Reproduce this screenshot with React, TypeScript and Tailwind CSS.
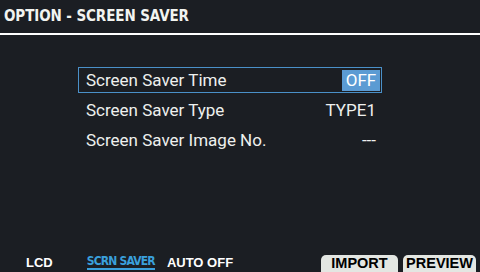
import React from "react";

const rows = [
    {label: "Screen Saver Time", value: "OFF", selected: true},
    {label: "Screen Saver Type", value: "TYPE1", selected: false},
    {label: "Screen Saver Image No.", value: "---", selected: false},
];

export default function App() {
    return (
        <div className="w-[480px] h-[272px] bg-[#1b1e23] text-white flex flex-col overflow-hidden font-['Roboto',sans-serif]">
            <header className="h-[35px] border-b-2 border-white flex items-center pl-[4px]">
                <h1 className="font-['DejaVu_Sans_Condensed','DejaVu_Sans',sans-serif] font-bold text-[15px] leading-none tracking-[-0.1px] text-[#f2f4f0]">
                    OPTION - SCREEN SAVER
                </h1>
            </header>

            <main className="flex-1 pt-[32px] pl-[78px]">
                <div className="w-[304px] flex flex-col gap-[4px]">
                    {rows.map((row) => (
                        <div
                            key={row.label}
                            className={`h-[26px] flex items-center justify-between pl-[7px] pr-[1px] border ${row.selected ? "border-[#4a90c8]" : "border-transparent"}`}
                        >
                            <span className="pt-[2px] text-[17px] text-[#eef0ee]">{row.label}</span>
                            {row.selected ? (
                                <span className="h-[21px] w-[38px] pt-[1px] bg-[#5b9bd3] flex items-center justify-center text-[17px] text-white">
                                    {row.value}
                                </span>
                            ) : (
                                <span className="pt-[2px] text-[17px] pr-[4px] text-[#eef0ee]">{row.value}</span>
                            )}
                        </div>
                    ))}
                </div>
            </main>

            <footer className="h-[17px] flex items-end font-bold whitespace-nowrap">
                <span className="ml-[26px] mb-[3px] text-[13px] leading-[13px] font-['Liberation_Sans',sans-serif]">LCD</span>
                <span className="ml-[34px] font-['DejaVu_Sans_Condensed',sans-serif] text-[12px] leading-[14px] tracking-[-0.8px] text-[#3aa0dc] border-b-2 border-[#3aa0dc] mb-[2px]">
                    SCRN SAVER
                </span>
                <span className="ml-[12px] mb-[3px] text-[13px] leading-[13px] font-['Liberation_Sans',sans-serif]">AUTO OFF</span>
                <div className="flex-1" />
                <button className="w-[77px] h-[17px] bg-[#e3e6e2] text-black rounded-t-[5px] font-['Liberation_Sans',sans-serif] text-[14.5px] font-bold leading-[17px]">
                    IMPORT
                </button>
                <button className="ml-[5px] mr-[4px] w-[73px] h-[17px] bg-[#e3e6e2] text-black rounded-t-[5px] font-['Liberation_Sans',sans-serif] text-[14.5px] font-bold leading-[17px]">
                    PREVIEW
                </button>
            </footer>
        </div>
    );
}
